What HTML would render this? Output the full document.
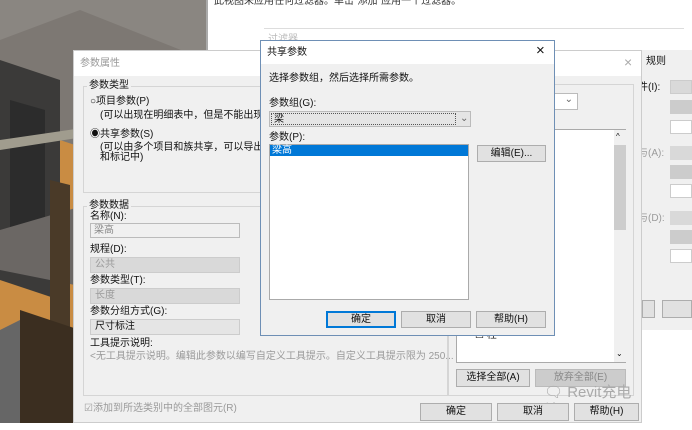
<!DOCTYPE html>
<html><head><meta charset="utf-8"><style>
*{margin:0;padding:0;box-sizing:border-box}
body{width:692px;height:430px;overflow:hidden;background:#fff;font-family:"Liberation Sans","Noto Sans CJK SC",sans-serif;font-size:10px;line-height:12px;color:#111;position:relative}
.a{position:absolute}
.btn{position:absolute;background:#e1e1e1;border:1px solid #adadad;text-align:center;font-size:10px;line-height:16px}
.grp{position:absolute;border:1px solid #d5d5d5}
.lbl{position:absolute;background:#f0f0f0;padding:0 2px;font-size:10px}
.dis{color:#9a9a9a}
.sel{position:absolute;background:#d9d9d9;border:1px solid #ccc;color:#9a9a9a;padding-left:4px;line-height:14px}
</style></head><body>
<div class="a" style="left:0;top:0;width:206px;height:423px;background:#6e6a66;overflow:hidden">
<svg width="206" height="423">
<polygon points="0,0 206,0 206,60 120,40 0,60" fill="#8a8681"/>
<polygon points="0,40 80,10 206,60 206,130 120,160 0,120" fill="#7d7873"/>
<polygon points="0,120 120,160 160,150 206,140 206,423 0,423" fill="#c98c43"/>
<polygon points="0,60 60,80 60,300 0,280" fill="#3b3a39"/>
<polygon points="10,100 45,110 45,260 10,250" fill="#2c2c2c"/>
<polygon points="0,230 120,195 206,220 206,260 100,290 0,270" fill="#6b6764"/>
<polygon points="50,180 70,185 70,423 50,423" fill="#4a3a28"/>
<polygon points="150,240 206,230 206,423 150,423" fill="#5b4630"/>
<polygon points="20,310 80,330 80,423 20,423" fill="#3b2e20"/>
<polygon points="0,330 20,320 20,423 0,423" fill="#666"/>
<polygon points="150,250 206,240 206,250 150,262" fill="#9a9a8e"/>
<polygon points="0,140 206,110 206,118 0,150" fill="#a09c8e"/>
</svg></div>
<div class="a" style="left:206px;top:0;width:2px;height:423px;background:#aaa"></div>
<div class="a" style="left:214px;top:-4px;color:#333">此视图未应用任何过滤器。单击"添加"应用一个过滤器。</div>
<div class="a" style="left:264px;top:28px;width:420px;height:1px;background:#ddd"></div>
<div class="a" style="left:268px;top:34px;color:#bbb">过滤器</div>
<div class="a" style="left:642px;top:50px;width:50px;height:280px;background:#f0f0f0">
<div class="a" style="left:4px;top:6px;font-size:10px">规则</div>
<div class="a" style="left:-4px;top:32px">件(I):</div>
<div class="a" style="left:28px;top:30px;width:22px;height:14px;background:#d9d9d9;border:1px solid #ccc"></div>
<div class="a" style="left:28px;top:50px;width:22px;height:14px;background:#ccc"></div>
<div class="a" style="left:28px;top:70px;width:22px;height:14px;background:#fff;border:1px solid #ccc"></div>
<div class="a dis" style="left:-4px;top:98px">与(A):</div>
<div class="a" style="left:28px;top:96px;width:22px;height:14px;background:#d9d9d9"></div>
<div class="a" style="left:28px;top:115px;width:22px;height:14px;background:#ccc"></div>
<div class="a" style="left:28px;top:134px;width:22px;height:14px;background:#fff;border:1px solid #ccc"></div>
<div class="a dis" style="left:-4px;top:163px">与(D):</div>
<div class="a" style="left:28px;top:161px;width:22px;height:14px;background:#d9d9d9"></div>
<div class="a" style="left:28px;top:180px;width:22px;height:14px;background:#ccc"></div>
<div class="a" style="left:28px;top:199px;width:22px;height:14px;background:#fff;border:1px solid #ccc"></div>
<div class="a" style="left:0;top:250px;width:13px;height:18px;background:#e1e1e1;border:1px solid #adadad"></div>
<div class="a" style="left:20px;top:250px;width:30px;height:18px;background:#e1e1e1;border:1px solid #adadad"></div>
</div>
<div class="a" style="left:73px;top:50px;width:569px;height:373px;background:#f0f0f0;border:1px solid #ccc">
<div class="a" style="left:0;top:0;width:567px;height:25px;background:#fff"></div>
<div class="a" style="left:6px;top:7px;color:#999">参数属性</div>
<div class="a" style="left:550px;top:3px;color:#aaa;font-size:14px;line-height:16px">×</div>
<div class="grp" style="left:9px;top:35px;width:180px;height:107px"></div>
<div class="lbl" style="left:13px;top:29px">参数类型</div>
<div class="a" style="left:16px;top:45px">○项目参数(P)</div>
<div class="a" style="left:26px;top:59px">(可以出现在明细表中，但是不能出现在</div>
<div class="a" style="left:16px;top:78px">◉共享参数(S)</div>
<div class="a" style="left:26px;top:92px;line-height:10px">(可以由多个项目和族共享，可以导出到<br>和标记中)</div>
<div class="grp" style="left:9px;top:155px;width:365px;height:190px"></div>
<div class="lbl" style="left:13px;top:149px">参数数据</div>
<div class="a" style="left:16px;top:160px">名称(N):</div>
<div class="a" style="left:16px;top:172px;width:150px;height:15px;border:1px solid #bbb;background:#f0f0f0;color:#888;padding-left:3px;line-height:13px">梁高</div>
<div class="a" style="left:16px;top:193px">规程(D):</div>
<div class="sel" style="left:16px;top:206px;width:150px;height:16px">公共</div>
<div class="a" style="left:16px;top:224px">参数类型(T):</div>
<div class="sel" style="left:16px;top:237px;width:150px;height:16px">长度</div>
<div class="a" style="left:16px;top:255px">参数分组方式(G):</div>
<div class="sel" style="left:16px;top:268px;width:150px;height:16px;background:#e5e5e5;color:#111">尺寸标注</div>
<div class="a" style="left:16px;top:287px">工具提示说明:</div>
<div class="a dis" style="left:16px;top:300px;white-space:nowrap">&lt;无工具提示说明。编辑此参数以编写自定义工具提示。自定义工具提示限为 250...</div>
<div class="a dis" style="left:10px;top:352px">☑添加到所选类别中的全部图元(R)</div>
<div class="grp" style="left:374px;top:33px;width:186px;height:312px"></div>
<div class="a" style="left:470px;top:42px;width:34px;height:17px;background:#fff;border:1px solid #bbb;color:#666;text-align:right;padding-right:4px">⌄</div>
<div class="a" style="left:382px;top:78px;width:170px;height:234px;background:#fff;border:1px solid #aaa">
<div class="a" style="left:157px;top:0;width:12px;height:232px;background:#f0f0f0"></div>
<div class="a" style="left:157px;top:15px;width:12px;height:85px;background:#cdcdcd"></div>
<div class="a" style="left:159px;top:1px;font-size:8px">^</div>
<div class="a" style="left:159px;top:218px;font-size:8px">⌄</div>
<div class="a" style="left:18px;top:200px">☐ 柱</div>
<div class="a" style="left:18px;top:188px;color:#555">☐ 结构</div>
</div>
<div class="btn" style="left:382px;top:318px;width:74px;height:18px">选择全部(A)</div>
<div class="btn" style="left:461px;top:318px;width:91px;height:18px;background:#ccc;color:#888;border-color:#bbb">放弃全部(E)</div>
<div class="a" style="left:470px;top:333px;color:#aaa;font-size:15px;line-height:18px">🗨 Revit充电站</div>
<div class="btn" style="left:346px;top:352px;width:72px;height:18px">确定</div>
<div class="btn" style="left:423px;top:352px;width:72px;height:18px">取消</div>
<div class="btn" style="left:500px;top:352px;width:65px;height:18px">帮助(H)</div>
</div>
<div class="a" style="left:260px;top:40px;width:295px;height:296px;background:#f0f0f0;border:1px solid #6e8fb5">
<div class="a" style="left:0;top:0;width:293px;height:23px;background:#fff"></div>
<div class="a" style="left:6px;top:6px">共享参数</div>
<div class="a" style="left:275px;top:2px;font-size:15px;line-height:16px">×</div>
<div class="a" style="left:8px;top:32px">选择参数组，然后选择所需参数。</div>
<div class="a" style="left:8px;top:57px">参数组(G):</div>
<div class="a" style="left:8px;top:70px;width:202px;height:16px;background:#e5e5e5;border:1px solid #bbb">
<div class="a" style="left:1px;top:1px;width:185px;height:12px;border:1px dotted #555;line-height:11px;padding-left:2px">梁</div>
<div class="a" style="left:190px;top:1px;color:#666">⌄</div></div>
<div class="a" style="left:8px;top:91px">参数(P):</div>
<div class="a" style="left:8px;top:103px;width:200px;height:156px;background:#fff;border:1px solid #aaa">
<div class="a" style="left:0;top:0;width:198px;height:11px;background:#0078d7;color:#fff;line-height:11px;padding-left:2px">梁高</div></div>
<div class="btn" style="left:216px;top:104px;width:69px;height:17px">编辑(E)...</div>
<div class="btn" style="left:65px;top:270px;width:70px;height:17px;border:2px solid #0078d7;line-height:13px">确定</div>
<div class="btn" style="left:140px;top:270px;width:70px;height:17px">取消</div>
<div class="btn" style="left:215px;top:270px;width:70px;height:17px">帮助(H)</div>
</div>
</body></html>
